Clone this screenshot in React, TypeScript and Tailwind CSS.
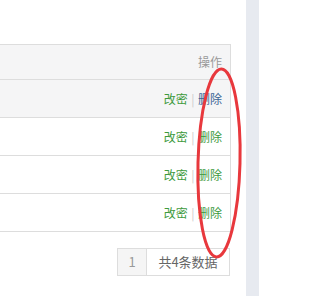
import React from "react";

const rows = [0, 1, 2, 3];

export default function App() {
  return (
    <div
      className="relative flex h-[296px] w-[259px] overflow-hidden bg-white"
      style={{ fontFamily: '"Noto Sans CJK SC", "Noto Sans", sans-serif' }}
    >
      <div className="flex flex-1 flex-col items-end bg-white pr-[15px] pt-[44px]">
        <div className="w-[231px] border-r border-t border-[#dddddd]">
          <div className="flex h-[35px] items-center justify-end border-b border-[#dddddd] bg-[#f5f5f6] pr-[8px] text-[12px] text-[#999999]">
            操作
          </div>
          {rows.map((i) => (
            <div
              key={i}
              className={
                i === 0
                  ? "flex h-[38px] items-center justify-end border-b border-[#dddddd] bg-[#f5f5f6] pr-[8px] text-[12px]"
                  : "flex h-[38px] items-center justify-end border-b border-[#dddddd] bg-white pr-[8px] text-[12px]"
              }
            >
              <span className="text-[#3d9a3d]">改密</span>
              <span className="mx-[3.5px] text-[#cccccc]">|</span>
              <span className={i === 0 ? "text-[#3a6494]" : "text-[#3d9a3d]"}>删除</span>
            </div>
          ))}
        </div>
        <div className="mr-[1px] mt-[16px] flex h-[28px] border border-[#dddddd] text-[13px]">
          <div className="flex w-[29px] items-center justify-center border-r border-[#dddddd] bg-[#f5f5f5] text-[#999999]">
            1
          </div>
          <div className="flex w-[82px] items-center justify-center text-[#666666]">共4条数据</div>
        </div>
      </div>
      <div className="w-[13px] bg-[#e7eaf0]" />
      <svg
        className="pointer-events-none absolute left-0 top-0"
        width="259"
        height="296"
        viewBox="0 0 259 296"
      >
        <ellipse
          cx="219"
          cy="163"
          rx="21"
          ry="94"
          fill="none"
          stroke="#e8383d"
          strokeWidth="3"
          transform="rotate(1.5 219 163)"
        />
      </svg>
    </div>
  );
}
